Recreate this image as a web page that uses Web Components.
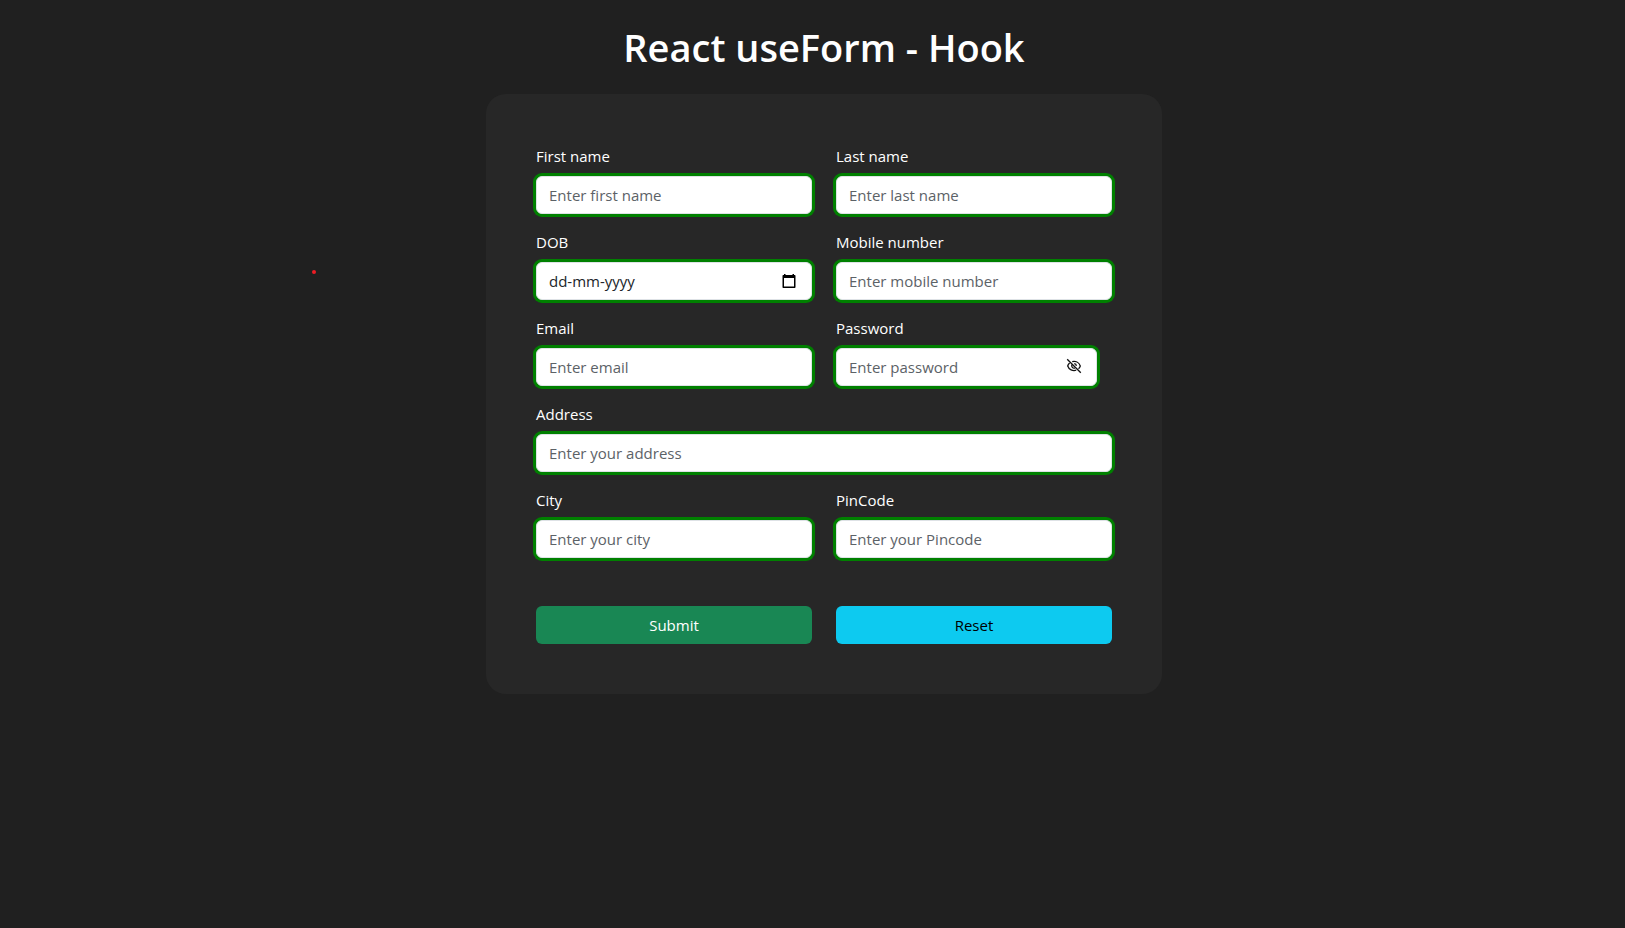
<!DOCTYPE html>
<html lang="en">
<head>
<meta charset="utf-8">
<meta name="viewport" content="width=device-width, initial-scale=1">
<title>React useForm - Hook</title>
<style>
  html, body { margin: 0; min-height: 100%; background: #202020; }
  body {
    font-family: "Open Sans", "Noto Sans", sans-serif;
    font-size: 15px;
    line-height: 24px;
    color: #fff;
  }
</style>
</head>
<body>
<form-page heading="React useForm - Hook">
  <form-card>
    <form-field label="First name" name="firstName" placeholder="Enter first name"></form-field>
    <form-field label="Last name" name="lastName" placeholder="Enter last name"></form-field>
    <form-field label="DOB" name="dob" kind="date" placeholder="dd-mm-yyyy"></form-field>
    <form-field label="Mobile number" name="mobile" type="tel" placeholder="Enter mobile number"></form-field>
    <form-field label="Email" name="email" type="email" placeholder="Enter email"></form-field>
    <form-field label="Password" name="password" kind="password" type="password" placeholder="Enter password"></form-field>
    <form-field wide label="Address" name="address" placeholder="Enter your address"></form-field>
    <form-field label="City" name="city" placeholder="Enter your city"></form-field>
    <form-field label="PinCode" name="pincode" placeholder="Enter your Pincode"></form-field>
    <form-button slot="actions" variant="success">Submit</form-button>
    <form-button slot="actions" variant="info">Reset</form-button>
  </form-card>
  <pointer-dot></pointer-dot>
</form-page>

<script>
  class FormPage extends HTMLElement {
    connectedCallback() {
      const root = this.attachShadow({ mode: 'open' });
      root.innerHTML = `
        <style>
          :host { display: block; position: relative; padding: 24px 0 24px 23px; }
          h1 {
            margin: 0 0 24px;
            font-size: 38px;
            line-height: 46px;
            font-weight: 600;
            text-align: center;
          }
        </style>
        <h1></h1>
        <main><slot></slot></main>`;
      root.querySelector('h1').textContent = this.getAttribute('heading');
    }
  }

  class FormCard extends HTMLElement {
    connectedCallback() {
      const root = this.attachShadow({ mode: 'open' });
      root.innerHTML = `
        <style>
          :host { display: block; max-width: 676px; margin: 0 auto; }
          form {
            box-sizing: border-box;
            padding: 50px;
            border-radius: 20px;
            background: #272727;
          }
          .grid { display: grid; grid-template-columns: 1fr 1fr; gap: 16px 24px; }
          .actions { margin-top: 48px; }
          ::slotted([wide]) { grid-column: 1 / -1; }
        </style>
        <form>
          <div class="grid"><slot></slot></div>
          <div class="grid actions"><slot name="actions"></slot></div>
        </form>`;
    }
  }

  const icons = {
    date: `<button type="button" aria-label="Open calendar">
      <svg width="16" height="16" viewBox="0 0 16 16">
        <path fill="#000" fill-rule="evenodd" d="M3 1h1.500v1h7V1H13v1h.5c.6 0 1 .4 1 1v11c0 .6-.4 1-1 1h-11c-.6 0-1-.4-1-1V3c0-.6.4-1 1-1H3zM3 5v8.500h10V5z"/>
      </svg></button>`,
    password: `<button type="button" aria-label="Show password">
      <svg width="16" height="16" viewBox="0 0 16 16" fill="none" stroke="#111" stroke-width="1.300">
        <path d="M6.200 3.700C10 2.800 13.200 4.700 14.300 8c-.4 1.200-1 2.100-1.800 2.800"/>
        <path d="M3.600 5C2.700 5.800 2 6.800 1.700 8c1.200 3.600 5 5.300 8.500 4.200"/>
        <path d="M6 6.600c-1 2 .8 4.200 3 3.400"/>
        <path d="M8.200 5.700c1.200.1 2.100 1 2.200 2.200"/>
        <path d="M1.200 1.200l13.600 13.600"/>
      </svg></button>`
  };

  class FormField extends HTMLElement {
    connectedCallback() {
      const kind = this.getAttribute('kind') || 'plain';
      const root = this.attachShadow({ mode: 'open' });
      root.innerHTML = `
        <style>
          :host { display: block; min-width: 0; }
          label { display: block; width: fit-content; margin-bottom: 8px; font-weight: 500; }
          .control {
            box-sizing: border-box;
            display: flex;
            align-items: center;
            height: 38px;
            padding: 0 12px;
            border: 1px solid #dee2e6;
            border-radius: 6px;
            background: #fff;
            box-shadow: 0 0 0 3px #008000;
          }
          .control.password { margin-right: 15px; }
          input {
            flex: 1;
            min-width: 0;
            margin: 0;
            padding: 0;
            border: 0;
            outline: 0;
            background: none;
            color: #212529;
            font: inherit;
          }
          input::placeholder { color: #5c6267; opacity: 1; }
          .date input::placeholder { color: #212529; }
          button {
            display: flex;
            margin: 0 2px 0 0;
            padding: 0;
            border: 0;
            background: none;
            cursor: pointer;
          }
          .password button { padding-bottom: 2px; }
        </style>
        <label for="field"></label>
        <div class="control ${kind}">
          <input id="field">
          ${icons[kind] || ''}
        </div>`;
      root.querySelector('label').textContent = this.getAttribute('label');
      const input = root.querySelector('input');
      input.type = this.getAttribute('type') || 'text';
      input.name = this.getAttribute('name');
      input.placeholder = this.getAttribute('placeholder');
    }
  }

  class FormButton extends HTMLElement {
    connectedCallback() {
      const root = this.attachShadow({ mode: 'open' });
      root.innerHTML = `
        <style>
          :host { display: block; --fill: #198754; --ink: #fff; }
          :host([variant="info"]) { --fill: #0dcaf0; --ink: #000; }
          button {
            width: 100%;
            padding: 7px 12px;
            border: 0;
            border-radius: 6px;
            background: var(--fill);
            color: var(--ink);
            font: inherit;
            cursor: pointer;
          }
        </style>
        <button type="button"><slot></slot></button>`;
    }
  }

  class PointerDot extends HTMLElement {
    connectedCallback() {
      this.attachShadow({ mode: 'open' }).innerHTML = `
        <style>
          :host {
            position: absolute;
            left: 312px;
            top: 270px;
            width: 4px;
            height: 4px;
            border-radius: 2px;
            background: #ed1c24;
          }
        </style>`;
    }
  }

  customElements.define('form-page', FormPage);
  customElements.define('form-card', FormCard);
  customElements.define('form-field', FormField);
  customElements.define('form-button', FormButton);
  customElements.define('pointer-dot', PointerDot);
</script>
</body>
</html>
